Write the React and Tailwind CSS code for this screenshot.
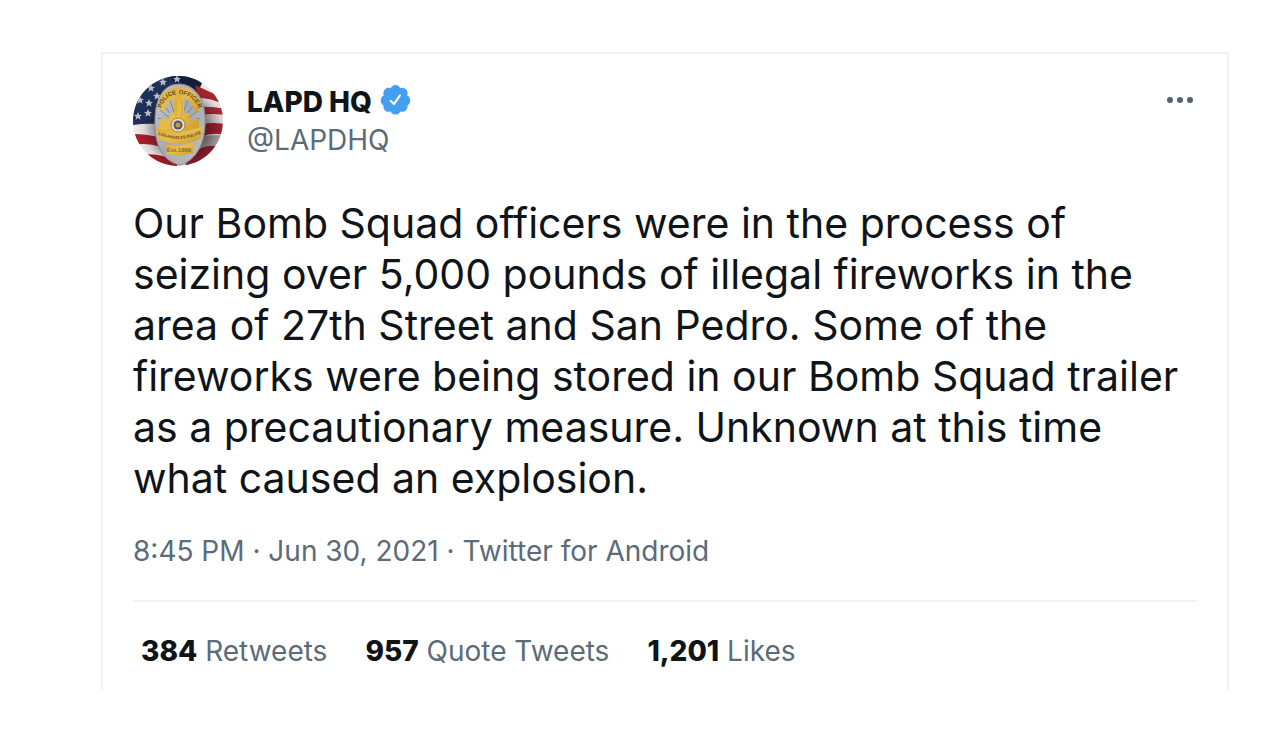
const STARS = [[30, 6], [44, 3], [18, 12], [7, 24], [16, 27], [15, 37], [5, 40], [24, 20]];

const STATS = [
  { count: '384', label: 'Retweets' },
  { count: '957', label: 'Quote Tweets' },
  { count: '1,201', label: 'Likes' },
];

function Avatar() {
  return (
    <svg className="size-[90px] shrink-0 rounded-full" viewBox="0 0 90 90" role="img" aria-label="LAPD HQ avatar">
      <defs>
        <radialGradient id="flagShade" gradientUnits="userSpaceOnUse" cx="50" cy="52" r="46">
          <stop offset="0.5" stopColor="#20121a" stopOpacity="0.55" />
          <stop offset="0.85" stopColor="#20121a" stopOpacity="0.08" />
          <stop offset="1" stopColor="#20121a" stopOpacity="0" />
        </radialGradient>
        <linearGradient id="silver" x1="0" y1="0" x2="1" y2="1">
          <stop offset="0" stopColor="#c9cbce" />
          <stop offset="0.5" stopColor="#a4aab0" />
          <stop offset="1" stopColor="#c5c3bd" />
        </linearGradient>
        <linearGradient id="gold" x1="0" y1="0" x2="1" y2="1">
          <stop offset="0" stopColor="#d9ab3c" />
          <stop offset="0.5" stopColor="#e8bd47" />
          <stop offset="1" stopColor="#cb9a30" />
        </linearGradient>
        <path id="topArc" d="M27 38Q29 19 46 18Q63 19 67 38" />
        <path id="bottomArc" d="M22 57Q46 69 71 56" />
      </defs>
      <rect width="90" height="90" fill="#eee9e9" />
      <path d="M0 0H66V30L40 50Q20 46 0 49Z" fill="#1f3059" />
      <path d="M38 0H72L66 14L42 9Z" fill="#141d3a" />
      <path d="M62 9Q75 15 90 22V28Q78 22 66 22Z" fill="#a8252e" />
      <path d="M68 31Q78 30 92 33V39Q80 37 68 39Z" fill="#b52735" />
      <path d="M70 48Q80 46 92 48V59Q80 56 70 60Z" fill="#ac202d" />
      <path d="M70 60L90 59L80 74L62 80Z" fill="#b1abad" />
      <path d="M58 78Q72 68 82 70L73 86L52 90Z" fill="#96202a" />
      <path d="M0 58Q15 58 28 62V71Q14 66 0 69Z" fill="#a91f2a" />
      <path d="M9 79Q24 76 44 85V90H9Z" fill="#a31c27" />
      <rect width="90" height="90" fill="url(#flagShade)" />
      {STARS.map(([x, y]) => (
        <path
          key={`${x}-${y}`}
          transform={`translate(${x} ${y})`}
          d="M0-4L1.200-1.200L4-1L1.800.8L2.500 3.800L0 2L-2.500 3.800L-1.800.8L-4-1L-1.200-1.200Z"
          fill="#b4bccd"
        />
      ))}
      <path d="M46 8C61 8 72 22 72 43C73 64 65 84 47 89C29 85 21 68 22 44C22 22 31 8 46 8Z" fill="url(#silver)" stroke="#8d8a8d" />
      <path d="M45 49L27 34M45 49L25 42M45 49L31 29M45 49L37 24M45 49L55 24M45 49L61 29M45 49L65 35M45 49L67 42" stroke="#7b8693" strokeWidth="1" />
      <path d="M25 31Q27 12 46 11Q65 12 69 31L62 36Q58 22 46 21Q34 22 31 36Z" fill="url(#gold)" />
      <path d="M43 19H48L51 24V37H56V43H66V56H26V43H36V37H41V24Z" fill="url(#gold)" />
      <path d="M43 25V40M49 25V40" stroke="#cfa03a" strokeWidth="1" />
      <path d="M23 51Q46 60 70 50L68 62Q46 74 25 62Z" fill="url(#gold)" />
      <path d="M33 68Q46 71 60 67V77Q46 81 34 78Z" fill="url(#gold)" />
      <circle cx="45" cy="49" r="7" fill="#e4dec9" stroke="#a8863e" />
      <circle cx="45" cy="49" r="4.500" fill="#4c5474" />
      <circle cx="45" cy="49" r="2.500" fill="#c29a4e" />
      <g fontFamily="Liberation Sans, sans-serif" fontWeight="700" fill="#5d4838">
        <text fontSize="6"><textPath href="#topArc" startOffset="50%" textAnchor="middle">POLICE OFFICER</textPath></text>
        <text fontSize="4"><textPath href="#bottomArc" startOffset="50%" textAnchor="middle">LOS ANGELES POLICE</textPath></text>
        <text x="46" y="76" fontSize="6" textAnchor="middle" fill="#8d6a2c">Est.1869</text>
      </g>
    </svg>
  );
}

function VerifiedBadge() {
  return (
    <svg className="mt-0.5 size-[31px] shrink-0 text-[#459ff0]" viewBox="1.500 1.500 21 22" role="img" aria-label="Verified account">
      <path
        fill="currentColor"
        d="M22.500 12.500c0-1.580-.875-2.950-2.148-3.600.154-.435.238-.905.238-1.400 0-2.210-1.710-3.998-3.818-3.998-.470 0-.920.084-1.336.250C14.818 2.415 13.510 1.500 12 1.500s-2.816.917-3.437 2.250c-.415-.165-.866-.250-1.336-.250-2.110 0-3.818 1.790-3.818 4 0 .494.083.964.237 1.400-1.272.650-2.147 2.018-2.147 3.600 0 1.495.782 2.798 1.942 3.486-.020.170-.032.340-.032.514 0 2.210 1.708 4 3.818 4 .470 0 .920-.086 1.335-.250.620 1.334 1.926 2.250 3.437 2.250 1.512 0 2.818-.916 3.437-2.250.415.163.865.248 1.336.248 2.110 0 3.818-1.790 3.818-4 0-.174-.012-.344-.033-.513 1.158-.687 1.943-1.990 1.943-3.484z"
      />
      <path d="M8.500 12.700L10.900 15.100L15.200 8.900" fill="none" stroke="#fff" strokeWidth="1.400" strokeLinecap="round" strokeLinejoin="round" />
    </svg>
  );
}

export default function App() {
  return (
    <main className="bg-white pt-[52px] pr-11 pl-[101px] font-['Inter',sans-serif] text-[#0f1419]">
      <article className="border-2 border-b-0 border-[#eff1f2] px-[30px] pt-[22px] pb-5">
        <header className="flex items-start">
          <Avatar />
          <div className="ml-6 pt-[7px] text-[28px] leading-[38px]">
            <div className="flex items-start gap-2">
              <h1 className="font-extrabold">LAPD HQ</h1>
              <VerifiedBadge />
            </div>
            <a href="#profile" className="block text-[#5b6b78]">@LAPDHQ</a>
          </div>
          <button type="button" aria-label="More options" className="mt-3 ml-auto flex h-6 items-center px-1 text-[#536471]">
            <svg className="h-6 w-[26px]" viewBox="0 0 26 24" fill="currentColor" aria-hidden="true">
              <circle cx="3" cy="12" r="3" />
              <circle cx="13" cy="12" r="3" />
              <circle cx="23" cy="12" r="3" />
            </svg>
          </button>
        </header>
        <p className="mt-8 text-[41px] leading-[51px]">
          Our Bomb Squad officers were in the process of seizing over 5,000 pounds of illegal fireworks in the area of
          27th Street and San Pedro. Some of the fireworks were being stored in our Bomb Squad trailer as a
          precautionary measure. Unknown at this time what caused an explosion.
        </p>
        <p className="mt-7 text-[28px] leading-[38px] text-[#5b6b78]">8:45 PM · Jun 30, 2021 · Twitter for Android</p>
        <ul className="mt-[30px] flex gap-[38px] border-t-2 border-[#eff1f2] px-2 pt-[30px] text-[28px] leading-[38px] text-[#5b6b78]">
          {STATS.map(({ count, label }) => (
            <li key={label}>
              <strong className="font-extrabold text-[#0f1419]">{count}</strong> {label}
            </li>
          ))}
        </ul>
      </article>
    </main>
  );
}
